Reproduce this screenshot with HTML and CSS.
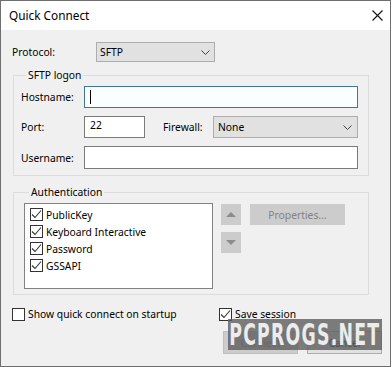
FILE: index.html
```html
<!DOCTYPE html>
<html>
<head>
<meta charset="utf-8">
<link rel="stylesheet" href="styles.css">
</head>
<body>
<div class="window">
  <div class="titlebar">
    <span class="title">Quick Connect</span>
    <svg class="close" width="11" height="11" viewBox="0 0 11 11"><path d="M0.5 0.5 L10.5 10.5 M10.5 0.5 L0.5 10.5" stroke="#111" stroke-width="1.1" fill="none"/></svg>
  </div>
  <div class="dialog">
    <div class="row proto-row">
      <span class="lbl lbl-proto">Protocol:</span>
      <div class="select sel-proto"><span>SFTP</span><svg class="chev" width="9" height="5" viewBox="0 0 9 5"><path d="M0.5 0.5 L4.5 4.5 L8.5 0.5" stroke="#444" fill="none"/></svg></div>
    </div>

    <div class="group g-logon">
      <div class="gtitle">SFTP logon</div>
      <div class="row r-host">
        <span class="lbl lbl-in">Hostname:</span>
        <div class="input in-host focus"><span class="caret"></span></div>
      </div>
      <div class="row r-port">
        <span class="lbl lbl-in">Port:</span>
        <div class="input in-port">22</div>
        <span class="lbl lbl-fw">Firewall:</span>
        <div class="select sel-fw"><span>None</span><svg class="chev" width="9" height="5" viewBox="0 0 9 5"><path d="M0.5 0.5 L4.5 4.5 L8.5 0.5" stroke="#444" fill="none"/></svg></div>
      </div>
      <div class="row r-user">
        <span class="lbl lbl-in">Username:</span>
        <div class="input in-user"></div>
      </div>
    </div>

    <div class="group g-auth">
      <div class="gtitle">Authentication</div>
      <div class="auth-body">
        <div class="list">
          <div class="item"><span class="cb checked"><svg width="11" height="11" viewBox="0 0 11 11"><path d="M1 5.5 L4 8.5 L10 1.5" stroke="#333" stroke-width="1.1" fill="none"/></svg></span><span>PublicKey</span></div>
          <div class="item"><span class="cb checked"><svg width="11" height="11" viewBox="0 0 11 11"><path d="M1 5.5 L4 8.5 L10 1.5" stroke="#333" stroke-width="1.1" fill="none"/></svg></span><span>Keyboard Interactive</span></div>
          <div class="item"><span class="cb checked"><svg width="11" height="11" viewBox="0 0 11 11"><path d="M1 5.5 L4 8.5 L10 1.5" stroke="#333" stroke-width="1.1" fill="none"/></svg></span><span>Password</span></div>
          <div class="item"><span class="cb checked"><svg width="11" height="11" viewBox="0 0 11 11"><path d="M1 5.5 L4 8.5 L10 1.5" stroke="#333" stroke-width="1.1" fill="none"/></svg></span><span>GSSAPI</span></div>
        </div>
        <div class="arrows">
          <div class="abtn"><svg width="10" height="5" viewBox="0 0 10 5"><path d="M0 5 L5 0 L10 5 Z" fill="#8c8c8c"/></svg></div>
          <div class="abtn"><svg width="10" height="5" viewBox="0 0 10 5"><path d="M0 0 L10 0 L5 5 Z" fill="#8c8c8c"/></svg></div>
        </div>
        <div class="btn-props">Properties...</div>
      </div>
    </div>

    <div class="row checks">
      <div class="check c-show"><span class="cb"></span><span>Show quick connect on startup</span></div>
      <div class="check c-save"><span class="cb checked"><svg width="11" height="11" viewBox="0 0 11 11"><path d="M1 5.5 L4 8.5 L10 1.5" stroke="#333" stroke-width="1.1" fill="none"/></svg></span><span>Save session</span></div>
    </div>

    <div class="row buttons">
      <div class="btn btn-connect">Connect</div>
      <div class="btn btn-cancel">Cancel</div>
    </div>

    <div class="watermark"><span>PCPROGS.NET</span></div>
  </div>
</div>
</body>
</html>
```

FILE: styles.css
```css
* { box-sizing: border-box; }
html, body { margin: 0; padding: 0; background: #ffffff; }
body {
  font-family: "Noto Sans", "Open Sans", sans-serif;
  font-size: 10.3px;
  color: #000;
  width: 392px;
  height: 367px;
  overflow: hidden;
}
.window {
  width: 391px;
  height: 367px;
  border: 1px solid #6e6e6e;
  display: flex;
  flex-direction: column;
  background: #f0f0f0;
}
.titlebar {
  height: 29px;
  flex: none;
  background: #ffffff;
  display: flex;
  align-items: center;
  justify-content: space-between;
  padding: 0 7px 0 8px;
}
.title { font-size: 11.8px; line-height: 16px; margin-top: -1px; }
.close { display: block; }

.dialog {
  flex: 1;
  position: relative;
  padding: 12px 0 0 10px;
}
.row { display: flex; align-items: center; }
.lbl { line-height: 14px; }
.lbl-proto { width: 85px; padding-left: 1px; }

.select {
  background: #e1e1e1;
  border: 1px solid #adadad;
  display: flex;
  align-items: center;
  justify-content: space-between;
  padding: 0 4px 0 3px;
  line-height: 14px;
}
.chev { display: block; }
.sel-proto { width: 119px; height: 20px; }
.proto-row { height: 20px; }

.group {
  border: 1px solid #dcdcdc;
  margin-left: 2px;
  width: 356px;
}
.gtitle {
  display: table;
  line-height: 14px;
  margin: -8px 0 0 5px;
  padding: 0 2px;
  background: #f0f0f0;
}
.g-logon { margin-top: 13px; padding: 0 10px 6px 7px; }
.lbl-in { width: 63px; }
.input {
  background: #fff;
  border: 1px solid #7a7a7a;
  height: 22px;
  line-height: 14px;
  padding: 3px 5px;
  display: flex;
  align-items: center;
}
.input.focus { border-color: #3f7890; background: #fbfeff; }
.caret { width: 1px; height: 14px; background: #000; }
.r-host { margin-top: 4px; }
.in-host { width: 274px; }
.r-port { margin-top: 8px; }
.in-port { width: 61px; padding-top: 0; padding-bottom: 4px; }
.lbl-fw { width: 50px; margin-left: 18px; }
.sel-fw { width: 145px; height: 22px; padding: 0 5px 0 4px; }
.r-user { margin-top: 8px; }
.in-user { width: 274px; height: 23px; }

.g-auth { margin-top: 16px; padding: 0 0 5px 10px; }
.auth-body { display: flex; align-items: flex-start; margin-top: 4px; }
.list {
  width: 189px;
  height: 86px;
  background: #fff;
  border: 1px solid #828282;
  padding: 2px 0 0 5px;
}
.item { display: flex; align-items: center; height: 17px; }
.cb {
  width: 13px;
  height: 13px;
  border: 1px solid #333;
  background: #fff;
  display: flex;
  align-items: center;
  justify-content: center;
  margin-right: 3px;
  flex: none;
}
.cb svg { display: block; }
.arrows { margin: 1px 0 0 8px; display: flex; flex-direction: column; gap: 7px; }
.abtn {
  width: 20px;
  height: 21px;
  background: #cccccc;
  display: flex;
  align-items: center;
  justify-content: center;
}
.btn-props {
  margin: 1px 0 0 9px;
  width: 95px;
  height: 21px;
  background: #cccccc;
  color: #838383;
  display: flex;
  align-items: center;
  justify-content: center;
}

.checks { margin-top: 12px; height: 14px; }
.check { display: flex; align-items: center; }
.c-show { margin-left: 1px; width: 207px; }

.buttons { margin: 10px 0 0 212px; gap: 9px; }
.btn {
  width: 75px;
  height: 23px;
  border: 1px solid #adadad;
  background: #e1e1e1;
  display: flex;
  align-items: center;
  justify-content: center;
}
.btn-connect { color: #8a8a8a; border-color: #bfbfbf; background: #cccccc; }

.watermark {
  position: absolute;
  left: 227px;
  top: 289px;
  width: 154px;
  height: 31px;
  background: rgba(96, 96, 96, 0.82);
  display: flex;
  align-items: center;
  justify-content: center;
  overflow: hidden;
}
.watermark span {
  font-family: "DejaVu Sans Condensed", "DejaVu Sans", sans-serif;
  font-weight: bold;
  font-size: 31px;
  line-height: 31px;
  color: #ececec;
  letter-spacing: 2px;
  transform: scaleX(0.62);
  white-space: nowrap;
}
```
